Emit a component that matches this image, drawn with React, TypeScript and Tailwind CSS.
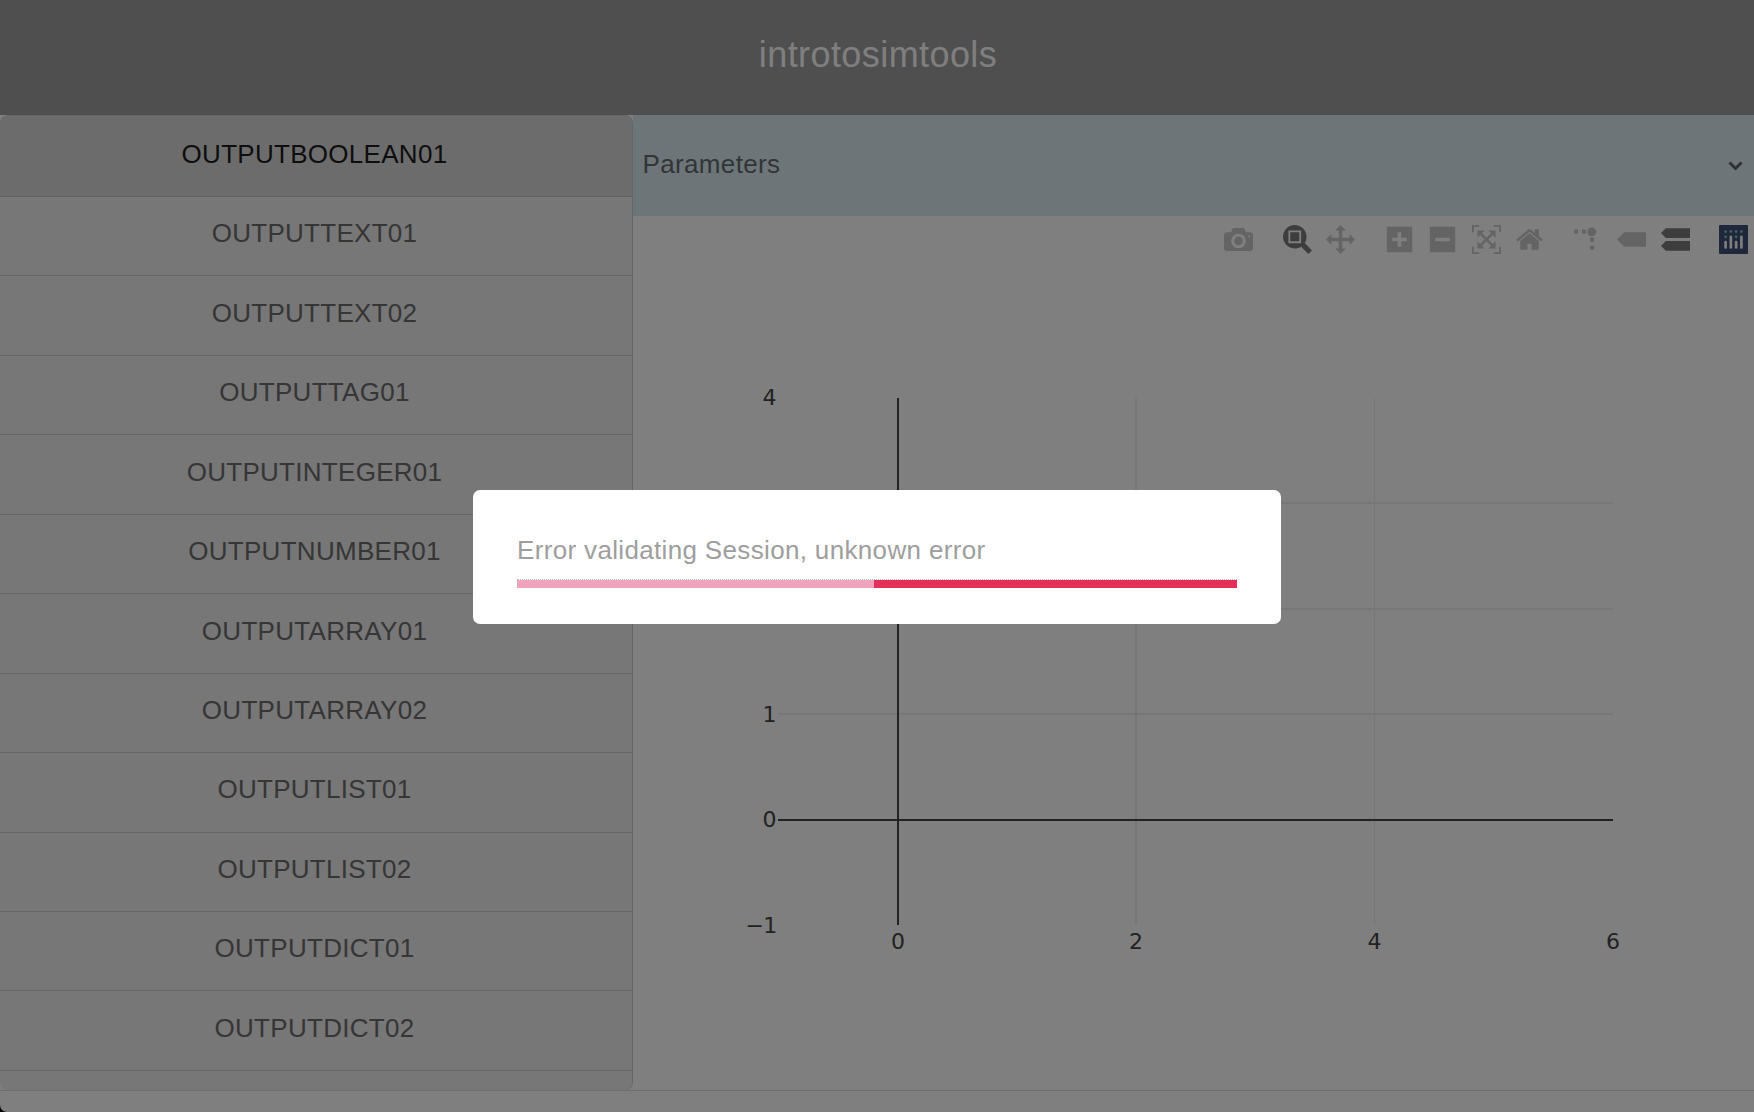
import React from "react";

const tabs = [
  "OUTPUTTEXT01", "OUTPUTTEXT02", "OUTPUTTAG01", "OUTPUTINTEGER01", "OUTPUTNUMBER01",
  "OUTPUTARRAY01", "OUTPUTARRAY02", "OUTPUTLIST01", "OUTPUTLIST02", "OUTPUTDICT01", "OUTPUTDICT02",
];

type Icon = { name: string; w: number; d: string; t?: string; active?: boolean };

const groups: Icon[][] = [
  [
    { name: "camera", w: 1000, d: "m500 450c-83 0-150-67-150-150 0-83 67-150 150-150 83 0 150 67 150 150 0 83-67 150-150 150z m400 150h-120c-16 0-34 13-39 29l-31 93c-6 15-23 28-40 28h-340c-16 0-34-13-39-28l-31-94c-6-15-23-28-40-28h-120c-55 0-100-45-100-100v-450c0-55 45-100 100-100h800c55 0 100 45 100 100v450c0 55-45 100-100 100z m-400-550c-138 0-250 112-250 250 0 138 112 250 250 250 138 0 250-112 250-250 0-138-112-250-250-250z m365 380c-19 0-35 16-35 35 0 19 16 35 35 35 19 0 35-16 35-35 0-19-16-35-35-35z" },
  ],
  [
    { name: "zoom", w: 1000, active: true, d: "m1000-25l-250 251c40 63 63 138 63 218 0 224-182 406-407 406-224 0-406-182-406-406s183-406 407-406c80 0 155 22 218 62l250-250 125 125z m-812 250l0 438 437 0 0-438-437 0z m62 375l313 0 0-312-313 0 0 312z" },
    { name: "pan", w: 1000, d: "m1000 350l-187 188 0-125-250 0 0 250 125 0-188 187-187-187 125 0 0-250-250 0 0 125-188-188 186-187 0 125 252 0 0-250-125 0 187-188 188 188-125 0 0 250 250 0 0-126 187 188z" },
  ],
  [
    { name: "plus", w: 875, d: "m1 787l0-875 875 0 0 875-875 0z m687-500l-187 0 0-187-125 0 0 187-188 0 0 125 188 0 0 187 125 0 0-187 187 0 0-125z" },
    { name: "minus", w: 875, d: "m0 788l0-876 875 0 0 876-875 0z m688-500l-500 0 0 125 500 0 0-125z" },
    { name: "autoscale", w: 1000, d: "m250 850l-187 0-63 0 0-62 0-188 63 0 0 188 187 0 0 62z m688 0l-188 0 0-62 188 0 0-188 62 0 0 188 0 62-62 0z m-875-938l0 188-63 0 0-188 0-62 63 0 187 0 0 62-187 0z m875 188l0-188-188 0 0-62 188 0 62 0 0 62 0 188-62 0z m-125 188l-1 0-93-94-156 156 156 156 92-93 2 0 0 250-250 0 0-2 93-92-156-156-156 156 94 92 0 2-250 0 0-250 0 0 93 93 157-156-157-156-93 94 0 0 0-250 250 0 0 0-94 93 156 157 156-157-93-93 0 0 250 0 0 250z" },
    { name: "home", w: 928.6, d: "m786 296v-267q0-15-11-26t-25-10h-214v214h-143v-214h-214q-15 0-25 10t-11 26v267q0 1 0 2t0 2l321 264 321-264q1-1 1-4z m124 39l-34-41q-5-5-12-6h-2q-7 0-12 3l-386 322-386-322q-7-4-13-4-7 2-12 7l-35 41q-4 5-3 13t6 12l401 334q18 15 42 15t43-15l136-114v109q0 8 5 13t13 5h107q8 0 13-5t5-13v-227l122-102q5-5 6-12t-4-13z" },
  ],
  [
    { name: "spikes", w: 1000, t: "matrix(1.5 0 0 -1.5 0 850)", d: "M512 409c0-57-46-104-103-104-57 0-104 47-104 104 0 57 47 103 104 103 57 0 103-46 103-103z m-327-39l92 0 0 92-92 0z m-185 0l92 0 0 92-92 0z m370-186l92 0 0 93-92 0z m0-184l92 0 0 92-92 0z" },
    { name: "closest", w: 1500, d: "m375 725l0 0-375-375 375-374 0-1 1125 0 0 750-1125 0z" },
    { name: "compare", w: 1125, active: true, d: "m187 786l0 2-187-188 188-187 0 0 937 0 0 373-938 0z m0-499l0 1-187-188 188-188 0 0 937 0 0 376-938-1z" },
  ],
];

function ModeBar() {
  return (
    <div className="flex h-[29px] justify-end gap-[29.3px] pr-[5.8px]">
      {groups.map((g, i) => (
        <div key={i} className="flex gap-[14.6px]">
          {g.map((ic) => (
            <svg key={ic.name} className={ic.active ? "size-[29px] fill-[#7a7a7a]" : "size-[29px] fill-[#c8c8c8]"} viewBox={`0 0 ${ic.w} 1000`}>
              <path d={ic.d} transform={ic.t ?? "matrix(1 0 0 -1 0 850)"} />
            </svg>
          ))}
        </div>
      ))}
      <svg className="size-[29px]" viewBox="0 0 132 132">
        <rect width="132" height="132" rx="4" fill="#3f4f75" />
        <g fill="#80cfbe">
          <circle cx="78" cy="54" r="6" /><circle cx="102" cy="30" r="6" /><circle cx="78" cy="30" r="6" />
          <circle cx="54" cy="30" r="6" /><circle cx="30" cy="30" r="6" /><circle cx="30" cy="54" r="6" />
        </g>
        <g fill="#fff">
          <path d="M30,72a6,6,0,0,0-6,6v24a6,6,0,0,0,12,0V78A6,6,0,0,0,30,72Z" />
          <path d="M78,72a6,6,0,0,0-6,6v24a6,6,0,0,0,12,0V78A6,6,0,0,0,78,72Z" />
          <path d="M54,48a6,6,0,0,0-6,6v48a6,6,0,0,0,12,0V54A6,6,0,0,0,54,48Z" />
          <path d="M102,48a6,6,0,0,0-6,6v48a6,6,0,0,0,12,0V54A6,6,0,0,0,102,48Z" />
        </g>
      </svg>
    </div>
  );
}

function Chart() {
  return (
    <svg className="block h-[836px] w-[1121px]" viewBox="633 254 1121 836">
      <g fill="#eee">
        <rect x="1135" y="398" width="2" height="527" />
        <rect x="1374" y="398" width="1" height="527" />
        <rect x="778" y="502" width="835" height="2" />
        <rect x="778" y="608" width="835" height="2" />
        <rect x="778" y="713" width="835" height="2" />
      </g>
      <g fill="#444">
        <rect x="897" y="398" width="2" height="527" />
        <rect x="778" y="819" width="835" height="2" />
      </g>
      <g fill="#444" fontSize="22" fontFamily="'DejaVu Sans', sans-serif" textAnchor="end">
        <text x="776.6" y="405">4</text>
        <text x="776.6" y="722">1</text>
        <text x="776.6" y="827">0</text>
        <text x="776.4" y="933" letterSpacing="-0.8">−1</text>
      </g>
      <g fill="#444" fontSize="22" fontFamily="'DejaVu Sans', sans-serif" textAnchor="middle">
        <text x="898" y="949">0</text>
        <text x="1136" y="949">2</text>
        <text x="1374.5" y="949">4</text>
        <text x="1613" y="949">6</text>
      </g>
    </svg>
  );
}

export default function App() {
  return (
    <div className="relative h-[1112px] w-[1754px] overflow-hidden bg-black font-['Liberation_Sans',sans-serif] text-[26px]">
      <div className="flex h-full flex-col overflow-hidden rounded-bl-[7px] bg-white">
        <header className="flex h-[115px] shrink-0 items-center justify-center bg-[#9e9e9e] pb-[5px] pl-[2px] text-[36px] tracking-[0.42px] text-white">
          introtosimtools
        </header>
        <main className="flex h-[975px] shrink-0">
          <nav className="flex w-[633px] shrink-0 flex-col overflow-hidden rounded-[8px] border-t border-r border-[#cdcdcd] bg-[#eee] text-center tracking-[0.29px] text-[#6c6c6c]">
            <div className="flex h-[81px] shrink-0 items-center justify-center border-b border-[#c0c0c0] bg-[#d9d9d9] pr-[3px] pb-[4px] text-[#1c1c1c]">
              OUTPUTBOOLEAN01
            </div>
            {tabs.map((t) => (
              <div key={t} className="flex h-[79.45px] shrink-0 items-center justify-center border-b border-[#cdcdcd] pr-[3px] pb-[4.6px]">
                {t}
              </div>
            ))}
          </nav>
          <section className="flex min-w-0 flex-1 flex-col">
            <div className="flex h-[101px] shrink-0 items-center justify-between bg-[#dcebf0] pr-[11px] pl-[9.5px] text-[#646b6e]">
              <span className="pb-[3px] tracking-[0.35px]">Parameters</span>
              <svg className="mt-[1.5px] h-[10px] w-[15px]" viewBox="0 0 15 10" fill="none" stroke="#5c6468" strokeWidth="3">
                <path d="M1.5 1.5L7.5 7.5L13.5 1.5" />
              </svg>
            </div>
            <div className="h-[9px] shrink-0" />
            <ModeBar />
            <Chart />
          </section>
        </main>
        <div className="flex-1 border-t border-[#dedede]" />
      </div>
      <div className="absolute inset-0 flex items-center justify-center bg-black/50">
        <div className="mt-[2px] flex h-[134px] w-[808px] flex-col rounded-[7px] bg-white px-[44px] pt-[45px]">
          <p className="h-[44px] text-[26px] leading-[30px] tracking-[0.34px] text-[#9e9e9e]">Error validating Session, unknown error</p>
          <div className="border-t border-dotted border-[#bbb]" />
          <div className="flex h-[8px] bg-[#e42f5a]">
            <div className="w-[357px] bg-[#efa3bd]" />
          </div>
        </div>
      </div>
    </div>
  );
}
